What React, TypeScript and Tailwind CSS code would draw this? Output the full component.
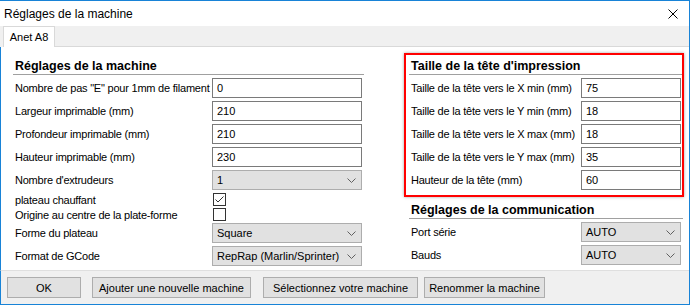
const font = "font-['Liberation_Sans',Arial,sans-serif]"

const Chevron = () => (
  <svg width="9" height="5" viewBox="0 0 9 5" className="shrink-0">
    <path d="M0.5 0.5 L4.5 4.5 L8.5 0.5" fill="none" stroke="#606060" strokeWidth="1" />
  </svg>
)

const TextField = ({ value, w }: { value: string; w: string }) => (
  <input
    readOnly
    defaultValue={value}
    className={`${w} h-[20px] shrink-0 border border-[#7a7a7a] bg-white pl-[4px] text-[11px] text-black outline-none ${font}`}
  />
)

const Select = ({ value, w }: { value: string; w: string }) => (
  <div className={`${w} h-[20px] shrink-0 border border-[#adadad] bg-[#e1e1e1] flex items-center justify-between pl-[4px] pr-[5px]`}>
    <span className="whitespace-nowrap">{value}</span>
    <Chevron />
  </div>
)

const Row = ({ label, children, cls = "" }: { label: string; children: React.ReactNode; cls?: string }) => (
  <div className={`flex items-center justify-between pl-[2px] pr-[2px] ${cls}`}>
    <span className="whitespace-nowrap tracking-[-0.22px]">{label}</span>
    {children}
  </div>
)

const Heading = ({ text, h }: { text: string; h: string }) => (
  <div className={`${h} flex items-end pl-[2px] border-b border-[#a0a0a0]`}>
    <span className="font-bold text-[12.5px] leading-[16px] whitespace-nowrap">{text}</span>
  </div>
)

const Check = ({ checked }: { checked?: boolean }) => (
  <div className="w-[13px] h-[13px] border border-[#333] bg-white flex items-center justify-center shrink-0">
    {checked && (
      <svg width="11" height="11" viewBox="0 0 11 11">
        <path d="M1.5 5.5 L4 8 L9.5 2.5" fill="none" stroke="#333" strokeWidth="1" />
      </svg>
    )}
  </div>
)

const Btn = ({ label, w, cls = "" }: { label: string; w: string; cls?: string }) => (
  <div className={`${w} h-[21px] border border-[#adadad] bg-[#e1e1e1] flex items-center justify-center whitespace-nowrap ${cls}`}>
    {label}
  </div>
)

export default function App() {
  return (
    <div className={`relative w-[690px] h-[305px] bg-white border-t border-r border-b border-[#1883d7] flex flex-col text-[11px] leading-[14px] text-black ${font}`}>
      {/* title bar */}
      <div className="h-[25px] flex items-center justify-between pl-[4px] pr-[11px]">
        <span className="text-[12px]">Réglages de la machine</span>
        <svg width="10" height="10" viewBox="0 0 10 10">
          <path d="M0.5 0.5 L9.5 9.5 M9.5 0.5 L0.5 9.5" stroke="#000" strokeWidth="1" />
        </svg>
      </div>

      {/* tabs */}
      <div className="h-[21px] bg-[#f0f0f0] flex items-end">
        <div className="ml-[3px] w-[52px] h-[21px] bg-white border-t border-l border-r border-[#d9d9d9] flex items-center justify-center">
          Anet A8
        </div>
        <div className="flex-1 h-[1px] bg-[#d9d9d9]"></div>
      </div>

      {/* content */}
      <div className="flex-1 flex border-l border-[#1883d7]">
        <div className="ml-[12px] w-[351px] flex flex-col">
          <Heading text="Réglages de la machine" h="h-[28px]" />
          <div className="mt-[3px] flex flex-col gap-[3px]">
            <Row label={'Nombre de pas "E" pour 1mm de filament'}><TextField value="0" w="w-[150px]" /></Row>
            <Row label="Largeur imprimable (mm)"><TextField value="210" w="w-[150px]" /></Row>
            <Row label="Profondeur imprimable (mm)"><TextField value="210" w="w-[150px]" /></Row>
            <Row label="Hauteur imprimable (mm)"><TextField value="230" w="w-[150px]" /></Row>
            <Row label="Nombre d'extrudeurs"><Select value="1" w="w-[150px]" /></Row>
          </div>
          <div className="h-[13px] mt-[3px] flex items-center pl-[2px]">
            <span className="w-[198px] whitespace-nowrap tracking-[-0.22px]">plateau chauffant</span>
            <Check checked />
          </div>
          <div className="h-[13px] mt-[2px] flex items-center pl-[2px]">
            <span className="w-[198px] whitespace-nowrap tracking-[-0.22px]">Origine au centre de la plate-forme</span>
            <Check />
          </div>
          <Row label="Forme du plateau" cls="mt-[2px]"><Select value="Square" w="w-[150px]" /></Row>
          <Row label="Format de GCode" cls="mt-[3px]"><Select value="RepRap (Marlin/Sprinter)" w="w-[150px]" /></Row>
        </div>

        <div className="ml-[45px] w-[274px] flex flex-col">
          <Heading text="Taille de la tête d'impression" h="h-[28px]" />
          <div className="mt-[3px] flex flex-col gap-[3px]">
            <Row label="Taille de la tête vers le X min (mm)"><TextField value="75" w="w-[100px]" /></Row>
            <Row label="Taille de la tête vers le Y min (mm)"><TextField value="18" w="w-[100px]" /></Row>
            <Row label="Taille de la tête vers le X max (mm)"><TextField value="18" w="w-[100px]" /></Row>
            <Row label="Taille de la tête vers le Y max (mm)"><TextField value="35" w="w-[100px]" /></Row>
            <Row label="Hauteur de la tête (mm)"><TextField value="60" w="w-[100px]" /></Row>
          </div>
          <Heading text="Réglages de la communication" h="h-[29px]" />
          <Row label="Port série" cls="mt-[3px]"><Select value="AUTO" w="w-[100px]" /></Row>
          <Row label="Bauds" cls="mt-[3px]"><Select value="AUTO" w="w-[100px]" /></Row>
        </div>
      </div>

      {/* footer */}
      <div className="h-[34px] bg-[#f0f0f0] border-t border-[#dfdfdf] border-l border-l-[#1883d7] flex items-center">
        <Btn label="OK" w="w-[74px]" cls="ml-[6px]" />
        <Btn label="Ajouter une nouvelle machine" w="w-[159px]" cls="ml-[11px]" />
        <Btn label="Sélectionnez votre machine" w="w-[155px]" cls="ml-[12px]" />
        <Btn label="Renommer la machine" w="w-[121px]" cls="ml-[6px]" />
      </div>

      {/* annotation box */}
      <div className="absolute left-[404px] top-[52px] w-[280px] h-[144px] border-2 border-[#ff0000] shadow-[0_0_3px_rgba(0,0,0,0.35)]"></div>
    </div>
  )
}
